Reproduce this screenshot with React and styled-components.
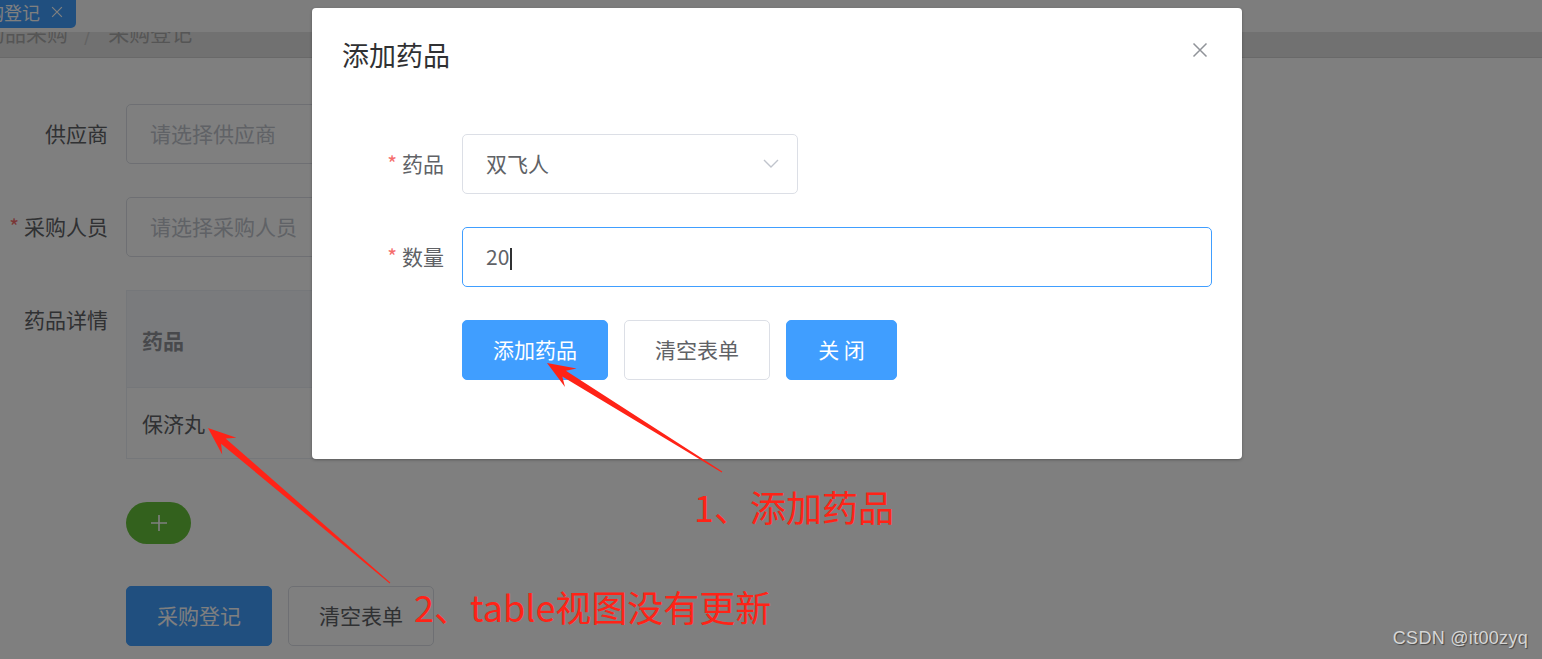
import React from 'react';
import styled, { createGlobalStyle } from 'styled-components';

const CJK = `"Noto Sans CJK SC", "Microsoft YaHei", sans-serif`;

const GlobalStyle = createGlobalStyle`
  html, body { margin: 0; padding: 0; }
  body { font-family: ${CJK}; background: #fff; overflow: hidden; }
  * { box-sizing: border-box; }
`;

const Viewport = styled.div`
  position: relative;
  width: 1542px;
  height: 659px;
  overflow: hidden;
  background: #fff;
`;

/* ---------- underlying page ---------- */
const TopBar = styled.div`
  height: 32px;
  background: #fafafa;
  display: flex;
  align-items: flex-start;
`;

const Tab = styled.div`
  margin-left: -46px;
  height: 28px;
  padding: 0 13px 4px 14px;
  background: #409eff;
  color: #fff;
  font-size: 18px;
  display: flex;
  align-items: center;
  gap: 11px;
  border-bottom-right-radius: 5px;
  white-space: nowrap;
`;

const BreadcrumbBar = styled.div`
  height: 26px;
  background: #e3e3e3;
  border-bottom: 1px solid #d3d3d3;
  overflow: hidden;
`;

const Crumbs = styled.div`
  display: flex;
  margin: -13px 0 0 -16px;
  font-size: 21px;
  line-height: 26px;
  color: #ababab;
  white-space: nowrap;
`;

const Sep = styled.span`
  margin: 0 16px;
  color: #c6c6c6;
`;

const Main = styled.div`
  padding: 46px 0 0 6px;
`;

const FormRow = styled.div`
  display: flex;
  align-items: flex-start;
  margin-bottom: ${p => p.$gap ?? 33}px;
`;

const Label = styled.label`
  flex: none;
  width: 120px;
  padding-right: 18px;
  text-align: right;
  font-size: 21px;
  line-height: 58px;
  color: #606266;
  white-space: nowrap;
`;

const Star = styled.span`
  color: #f56c6c;
  margin-right: 5px;
`;

const Control = styled.div`
  flex: none;
  display: flex;
  flex-direction: column;
  align-items: flex-start;
`;

const FieldBox = styled.div`
  width: ${p => (p.$w ? `${p.$w}px` : '100%')};
  height: 60px;
  border: 1px solid ${p => (p.$focus ? '#409eff' : '#dcdfe6')};
  border-radius: 5px;
  background: #fff;
  padding: 0 18px 2px 23px;
  display: flex;
  align-items: center;
  justify-content: space-between;
  font-size: 21px;
  color: ${p => (p.$placeholder ? '#c0c4cc' : '#606266')};
`;

const Caret = styled.span`
  display: inline-block;
  width: 1.5px;
  height: 22px;
  background: #303133;
  vertical-align: middle;
  margin-left: 1px;
`;

const Table = styled.div`
  width: 900px;
  border: 1px solid #ebeef5;
  font-size: 21px;
`;

const HeadRow = styled.div`
  height: 97px;
  background: #f5f7fa;
  display: flex;
  align-items: center;
  padding: 2px 0 0 15px;
  font-weight: 700;
  color: #909399;
  border-bottom: 1px solid #ebeef5;
`;

const BodyRow = styled.div`
  height: 70px;
  display: flex;
  align-items: center;
  padding-left: 15px;
  color: #606266;
`;

const RoundBtn = styled.button`
  margin-top: 43px;
  width: 65px;
  height: 42px;
  border: none;
  border-radius: 21px;
  background: #67c23a;
  display: flex;
  align-items: center;
  justify-content: center;
  padding: 0;
`;

const Btns = styled.div`
  display: flex;
  gap: 16px;
`;

const Btn = styled.button`
  height: 60px;
  padding: 0 30px 2px;
  border-radius: 5px;
  font-family: ${CJK};
  font-size: 21px;
  white-space: pre;
  border: 1px solid ${p => (p.$primary ? '#409eff' : '#dcdfe6')};
  background: ${p => (p.$primary ? '#409eff' : '#fff')};
  color: ${p => (p.$primary ? '#fff' : '#606266')};
  min-width: ${p => p.$min ?? 0}px;
`;

/* ---------- modal ---------- */
const Overlay = styled.div`
  position: absolute;
  inset: 0;
  background: rgba(0, 0, 0, 0.5);
`;

const DialogLayer = styled.div`
  position: absolute;
  inset: 0;
`;

const Dialog = styled.div`
  margin: 8px 0 0 312px;
  width: 930px;
  background: #fff;
  border-radius: 4px;
  box-shadow: 0 1px 3px rgba(0, 0, 0, 0.3);
`;

const DialogHeader = styled.div`
  padding: 29px 30px 16px;
  display: flex;
  justify-content: space-between;
  align-items: flex-start;
`;

const DialogTitle = styled.span`
  font-size: 27px;
  line-height: 36px;
  color: #303133;
`;

const CloseBox = styled.span`
  width: 24px;
  height: 24px;
  margin-top: 1px;
  display: flex;
  align-items: center;
  justify-content: center;
`;

const DialogBody = styled.div`
  padding: 45px 30px 46px;
`;

const DialogControl = styled.div`
  flex: 1;
  display: flex;
`;

/* ---------- annotations ---------- */
const Annotations = styled.svg`
  position: absolute;
  inset: 0;
  pointer-events: none;
`;

const Note = styled.div`
  position: absolute;
  left: ${p => p.$x}px;
  top: ${p => p.$y}px;
  font-size: 36px;
  line-height: 36px;
  color: #ff2317;
  white-space: nowrap;
`;

const Watermark = styled.div`
  position: absolute;
  right: 14px;
  bottom: 10px;
  font-family: "Liberation Sans", Arial, sans-serif;
  font-size: 18px;
  letter-spacing: 0.3px;
  color: #d6d6d6;
  text-shadow: 1px 1px 1px rgba(0, 0, 0, 0.45);
`;

function arrowPoints(tx, ty, px, py, head = 28, wing = 11, shaft = 3.4) {
  const dx = px - tx;
  const dy = py - ty;
  const L = Math.hypot(dx, dy);
  const ux = dx / L;
  const uy = dy / L;
  const nx = -uy;
  const ny = ux;
  const bx = px - ux * head;
  const by = py - uy * head;
  const sx = px - ux * head * 0.72;
  const sy = py - uy * head * 0.72;
  const pts = [
    [tx + nx * 0.5, ty + ny * 0.5],
    [sx + nx * shaft, sy + ny * shaft],
    [bx + nx * wing, by + ny * wing],
    [px, py],
    [bx - nx * wing, by - ny * wing],
    [sx - nx * shaft, sy - ny * shaft],
    [tx - nx * 0.5, ty - ny * 0.5],
  ];
  return pts.map(p => p.map(v => v.toFixed(1)).join(',')).join(' ');
}

const XIcon = ({ size, color, width = 1.3 }) => (
  <svg width={size} height={size} viewBox="0 0 16 16">
    <path d="M1.5 1.5 L14.5 14.5 M14.5 1.5 L1.5 14.5" stroke={color} strokeWidth={width} fill="none" />
  </svg>
);

export default function App() {
  return (
    <Viewport>
      <GlobalStyle />
      <TopBar>
        <Tab>
          <span>采购登记</span>
          <XIcon size={12} color="#fff" width={1.6} />
        </Tab>
      </TopBar>
      <BreadcrumbBar>
        <Crumbs>
          <span>药品采购</span>
          <Sep>/</Sep>
          <span>采购登记</span>
        </Crumbs>
      </BreadcrumbBar>
      <Main>
        <FormRow>
          <Label>供应商</Label>
          <Control>
            <FieldBox $w={700} $placeholder>请选择供应商</FieldBox>
          </Control>
        </FormRow>
        <FormRow>
          <Label><Star>*</Star>采购人员</Label>
          <Control>
            <FieldBox $w={700} $placeholder>请选择采购人员</FieldBox>
          </Control>
        </FormRow>
        <FormRow $gap={42}>
          <Label>药品详情</Label>
          <Control>
            <Table>
              <HeadRow>药品</HeadRow>
              <BodyRow>保济丸</BodyRow>
            </Table>
            <RoundBtn>
              <svg width="18" height="18" viewBox="0 0 18 18">
                <path d="M9 1 V17 M1 9 H17" stroke="#fff" strokeWidth="1.6" />
              </svg>
            </RoundBtn>
          </Control>
        </FormRow>
        <FormRow>
          <Label />
          <Btns>
            <Btn $primary>采购登记</Btn>
            <Btn>清空表单</Btn>
          </Btns>
        </FormRow>
      </Main>

      <Overlay />

      <DialogLayer>
        <Dialog>
          <DialogHeader>
            <DialogTitle>添加药品</DialogTitle>
            <CloseBox>
              <XIcon size={16} color="#909399" width={1.5} />
            </CloseBox>
          </DialogHeader>
          <DialogBody>
            <FormRow>
              <Label><Star>*</Star>药品</Label>
              <DialogControl>
                <FieldBox $w={336}>
                  <span>双飞人</span>
                  <svg width="16" height="9" viewBox="0 0 16 9">
                    <path d="M1 1 L8 8 L15 1" stroke="#c0c4cc" strokeWidth="1.4" fill="none" />
                  </svg>
                </FieldBox>
              </DialogControl>
            </FormRow>
            <FormRow>
              <Label><Star>*</Star>数量</Label>
              <DialogControl>
                <FieldBox $focus>
                  <span>20<Caret /></span>
                </FieldBox>
              </DialogControl>
            </FormRow>
            <FormRow>
              <Label />
              <Btns>
                <Btn $primary>添加药品</Btn>
                <Btn>清空表单</Btn>
                <Btn $primary $min={111}>关 闭</Btn>
              </Btns>
            </FormRow>
          </DialogBody>
        </Dialog>
      </DialogLayer>

      <Annotations width="1542" height="659" viewBox="0 0 1542 659">
        <polygon points={arrowPoints(722, 472, 547, 363)} fill="#ff2317" />
        <polygon points={arrowPoints(390, 583, 208, 428)} fill="#ff2317" />
      </Annotations>
      <Note $x={694} $y={488}>1、添加药品</Note>
      <Note $x={414} $y={588}>2、table视图没有更新</Note>
      <Watermark>CSDN @it00zyq</Watermark>
    </Viewport>
  );
}
